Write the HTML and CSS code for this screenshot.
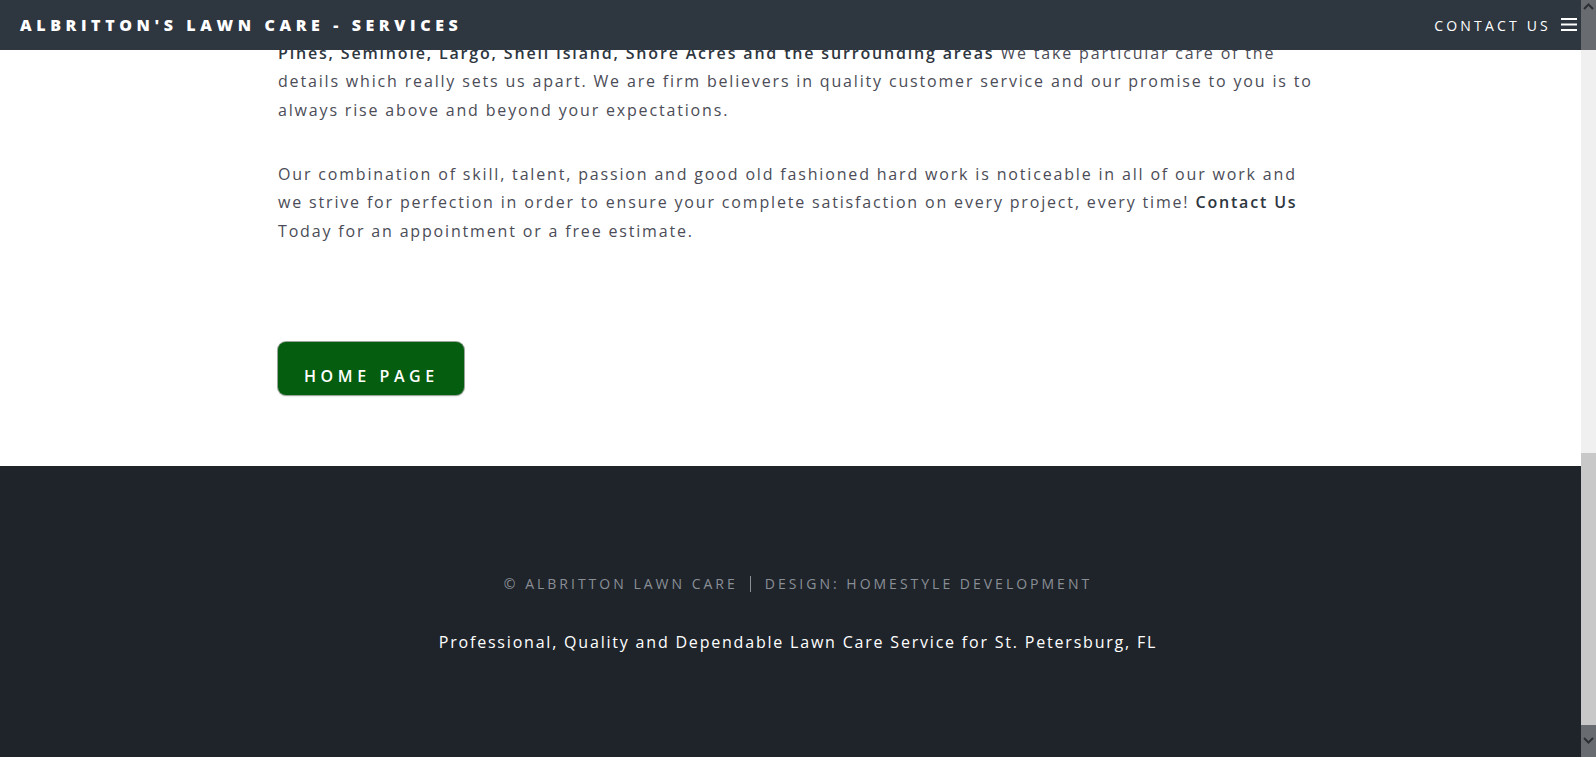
FILE: index.html
```html
<!DOCTYPE html>
<html lang="en">
<head>
<meta charset="utf-8">
<title>Albritton's Lawn Care - Services</title>
<link rel="stylesheet" href="styles.css">
</head>
<body>
<div class="window">
  <div class="page">
    <header class="topbar">
      <div class="brand">ALBRITTON'S LAWN CARE - SERVICES</div>
      <nav class="nav">
        <a class="nav-link" href="#">CONTACT US</a>
        <svg class="burger" width="16" height="14" viewBox="0 0 16 14"><rect x="0" y="1" width="16" height="2" fill="#fff"/><rect x="0" y="6.5" width="16" height="2" fill="#fff"/><rect x="0" y="12" width="16" height="2" fill="#fff"/></svg>
      </nav>
    </header>
    <main class="content">
      <p class="para"><strong>Pines, Seminole, Largo, Shell Island, Shore Acres and the surrounding areas</strong> We take particular care of the details which really sets us apart. We are firm believers in quality customer service and our promise to you is to always rise above and beyond your expectations.</p>
      <p class="para">Our combination of skill, talent, passion and good old fashioned hard work is noticeable in all of our work and we strive for perfection in order to ensure your complete satisfaction on every project, every time! <strong>Contact Us</strong> Today for an appointment or a free estimate.</p>
      <a class="home-btn" href="#">HOME PAGE</a>
    </main>
    <footer class="footer">
      <div class="copyright"><span class="copy-item">© ALBRITTON LAWN CARE</span><span class="copy-item sep">DESIGN: HOMESTYLE DEVELOPMENT</span></div>
      <div class="tagline">Professional, Quality and Dependable Lawn Care Service for St. Petersburg, FL</div>
    </footer>
  </div>
  <div class="scrollbar">
    <div class="sb-up"><svg width="15" height="12" viewBox="0 0 15 12"><path d="M3 9 L7.5 4.5 L12 9" fill="none" stroke="#2c2f33" stroke-width="2"/></svg></div>
    <div class="sb-track"><div class="sb-thumb"></div></div>
    <div class="sb-down"><svg width="15" height="12" viewBox="0 0 15 12"><path d="M3 3 L7.5 7.5 L12 3" fill="none" stroke="#2c2f33" stroke-width="2"/></svg></div>
  </div>
</div>
</body>
</html>
```

FILE: styles.css
```css
html, body {
  margin: 0;
  padding: 0;
  height: 757px;
  overflow: hidden;
  background: #fff;
}

.window {
  display: flex;
  height: 757px;
  font-family: "Open Sans", "Noto Sans", sans-serif;
}

.page {
  position: relative;
  flex: 1;
  display: flex;
  flex-direction: column;
  overflow: hidden;
}

.topbar {
  position: absolute;
  top: 0;
  left: 0;
  right: 0;
  height: 50px;
  background: #2e3640;
  display: flex;
  align-items: center;
  justify-content: space-between;
  padding: 0 4px 0 20px;
  z-index: 2;
}

.brand {
  color: #fff;
  font-weight: 800;
  font-size: 16px;
  letter-spacing: 4.6px;
}

.nav {
  display: flex;
  align-items: center;
  gap: 10px;
}

.nav-link {
  color: #fff;
  text-decoration: none;
  font-size: 14px;
  letter-spacing: 3.2px;
}

.burger {
  display: block;
  margin-top: -2px;
}

.content {
  padding: 38.6px 0 71px 278px;
  width: 1040px;
}

.para {
  margin: 0 0 34.6px;
  font-size: 16px;
  line-height: 28.8px;
  letter-spacing: 1.83px;
  color: #4b4c57;
}

.para strong {
  color: #2e3640;
  font-weight: 600;
}

.home-btn {
  display: inline-block;
  margin-top: 61.6px;
  background: #055e10;
  color: #fff;
  text-decoration: none;
  font-size: 16px;
  font-weight: 600;
  letter-spacing: 4.6px;
  line-height: 17px;
  padding: 26px 25px 10px 26px;
  border-radius: 8px;
  box-shadow: 0 0 0 1px #9aa59b, 0 1px 2px rgba(0,0,0,0.25);
}

.footer {
  flex: 1;
  background: #1f242b;
  display: flex;
  flex-direction: column;
  align-items: center;
  padding: 107.5px 0 0 15px;
}

.copyright {
  display: flex;
  align-items: center;
  color: #8a8f96;
  font-size: 14px;
  line-height: 20px;
  letter-spacing: 3px;
}

.copy-item.sep {
  margin-left: 12px;
  padding-left: 14px;
  border-left: 1px solid #8a8f96;
  line-height: 16px;
}

.tagline {
  margin-top: 36px;
  color: #fff;
  font-size: 16px;
  line-height: 24px;
  letter-spacing: 1.8px;
}

.scrollbar {
  width: 15px;
  display: flex;
  flex-direction: column;
  background: #f0f0f0;
}

.sb-up {
  height: 50px;
  background: #686c70;
}

.sb-up svg, .sb-down svg {
  display: block;
}

.sb-track {
  flex: 1;
  display: flex;
  flex-direction: column;
  justify-content: flex-end;
}

.sb-thumb {
  height: 272px;
  background: #c8c8c8;
}

.sb-down {
  height: 32px;
  background: #686c70;
  display: flex;
  align-items: center;
}
```
